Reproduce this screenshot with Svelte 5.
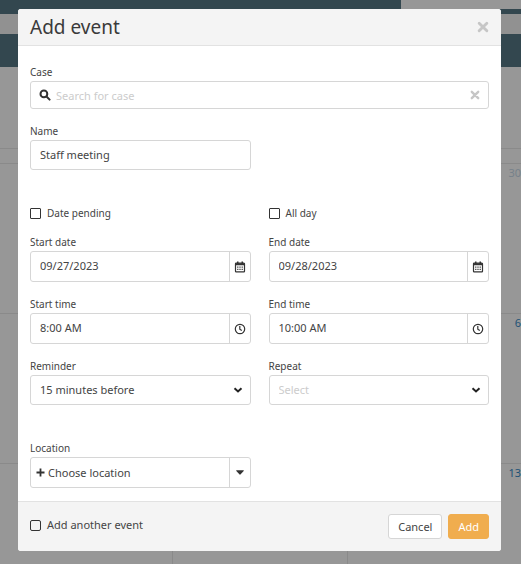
<script lang="ts">
  let caseQuery = $state('');
  let name = $state('Staff meeting');
  let datePending = $state(false);
  let allDay = $state(false);
  let startDate = $state('09/27/2023');
  let endDate = $state('09/28/2023');
  let startTime = $state('8:00 AM');
  let endTime = $state('10:00 AM');
  let reminder = $state('15');
  let repeat = $state('');
  let addAnother = $state(false);

  const weeks = ['30', '6', '13'];
</script>

{#snippet cross()}
  <svg class="cross" viewBox="0 0 10 10" aria-hidden="true">
    <path d="M1.8 1.8 8.2 8.2M8.2 1.8 1.8 8.2" />
  </svg>
{/snippet}

{#snippet calendarIcon()}
  <svg class="icon" viewBox="0 0 11 12" aria-hidden="true">
    <path class="line" d="M1.6 2.2h7.8a.6.6 0 0 1 .6.6v7.4a.6.6 0 0 1-.6.6H1.6a.6.6 0 0 1-.6-.6V2.8a.6.6 0 0 1 .6-.6z" />
    <path d="M1 2.2h9v2H1zM2.5.5h1.5v2H2.5zM7 .5h1.5v2H7z" />
    <path d="M2.7 5.5h1.2v1.2H2.7zM4.9 5.5h1.2v1.2H4.9zM7.1 5.5h1.2v1.2H7.1zM2.7 7.8h1.2v1.2H2.7zM4.9 7.8h1.2v1.2H4.9zM7.1 7.8h1.2v1.2H7.1z" />
  </svg>
{/snippet}

{#snippet clockIcon()}
  <svg class="icon" viewBox="0 0 12 12" aria-hidden="true">
    <circle class="line" cx="6" cy="6" r="4.7" />
    <path class="line" d="M5.8 3v3.2L7.8 7.6" />
  </svg>
{/snippet}

{#snippet chevron()}
  <svg class="chevron" viewBox="0 0 10 10" aria-hidden="true">
    <path d="M1.5 3.2 5 6.4 8.5 3.2" />
  </svg>
{/snippet}

<div class="page">
  <div class="backdrop">
    <div class="tabs"><span></span></div>
    <div class="subnav"></div>
    <div class="banner"></div>
    <div class="toolbar"></div>
    <div class="weekdays"></div>
    {#each weeks as day, i}
      <div class="week">
        <span></span>
        <span></span>
        <span class="day" class:other={i === 0}>{day}</span>
      </div>
    {/each}
  </div>

  <form class="modal" onsubmit={(e) => e.preventDefault()}>
    <header>
      <h1>Add event</h1>
      <button type="button" class="close" aria-label="Close">{@render cross()}</button>
    </header>

    <div class="body">
      <div class="field">
        <label for="case">Case</label>
        <div class="control search">
          <svg class="icon" viewBox="0 0 12 12" aria-hidden="true">
            <circle class="bold" cx="4.9" cy="4.9" r="3.4" />
            <path class="bold" d="M7.5 7.5 10.6 10.6" />
          </svg>
          <input id="case" type="text" placeholder="Search for case" bind:value={caseQuery} />
          <button type="button" class="clear" aria-label="Clear" onclick={() => (caseQuery = '')}>
            {@render cross()}
          </button>
        </div>
      </div>

      <div class="row">
        <div class="field">
          <label for="name">Name</label>
          <div class="control">
            <input id="name" type="text" bind:value={name} />
          </div>
        </div>
      </div>

      <div class="row section">
        <label class="check"><input type="checkbox" bind:checked={datePending} />Date pending</label>
        <label class="check"><input type="checkbox" bind:checked={allDay} />All day</label>
      </div>

      <div class="row">
        <div class="field">
          <label for="start-date">Start date</label>
          <div class="control group">
            <input id="start-date" type="text" bind:value={startDate} />
            <button type="button" aria-label="Pick start date">{@render calendarIcon()}</button>
          </div>
        </div>
        <div class="field">
          <label for="end-date">End date</label>
          <div class="control group">
            <input id="end-date" type="text" bind:value={endDate} />
            <button type="button" aria-label="Pick end date">{@render calendarIcon()}</button>
          </div>
        </div>
      </div>

      <div class="row">
        <div class="field">
          <label for="start-time">Start time</label>
          <div class="control group">
            <input id="start-time" type="text" bind:value={startTime} />
            <button type="button" aria-label="Pick start time">{@render clockIcon()}</button>
          </div>
        </div>
        <div class="field">
          <label for="end-time">End time</label>
          <div class="control group">
            <input id="end-time" type="text" bind:value={endTime} />
            <button type="button" aria-label="Pick end time">{@render clockIcon()}</button>
          </div>
        </div>
      </div>

      <div class="row">
        <div class="field">
          <label for="reminder">Reminder</label>
          <div class="control select">
            <select id="reminder" bind:value={reminder}>
              <option value="15">15 minutes before</option>
              <option value="30">30 minutes before</option>
            </select>
            {@render chevron()}
          </div>
        </div>
        <div class="field">
          <label for="repeat">Repeat</label>
          <div class="control select">
            <select id="repeat" class:empty={repeat === ''} bind:value={repeat}>
              <option value="">Select</option>
              <option value="daily">Daily</option>
              <option value="weekly">Weekly</option>
            </select>
            {@render chevron()}
          </div>
        </div>
      </div>

      <div class="row section">
        <div class="field">
          <label for="location">Location</label>
          <div class="control group">
            <button type="button" id="location" class="choose">
              <svg class="plus" viewBox="0 0 9 9" aria-hidden="true">
                <path d="M4.5.5v8M.5 4.5h8" />
              </svg>
              Choose location
            </button>
            <button type="button" aria-label="More locations">
              <svg class="caret" viewBox="0 0 8 5" aria-hidden="true">
                <path d="M.4.3h7.2q.4.2.1.6L4.4 4.6q-.4.3-.8 0L.3.9Q0 .5.4.3z" />
              </svg>
            </button>
          </div>
        </div>
      </div>
    </div>

    <footer>
      <label class="check large"><input type="checkbox" bind:checked={addAnother} />Add another event</label>
      <div class="actions">
        <button type="button" class="btn">Cancel</button>
        <button type="submit" class="btn primary">Add</button>
      </div>
    </footer>
  </form>
</div>

<style>
  .page {
    display: grid;
    min-height: 100vh;
    overflow: hidden;
    font-family: 'Noto Sans', 'Open Sans', sans-serif;
    font-size: 11px;
    color: #444;
    background: #979797;
  }

  .page > * {
    grid-area: 1 / 1;
    min-width: 0;
  }

  * {
    box-sizing: border-box;
  }

  button,
  input,
  select {
    margin: 0;
    padding: 0;
    border: none;
    background: none;
    font: inherit;
    color: inherit;
  }

  button {
    display: flex;
    align-items: center;
    justify-content: center;
    cursor: pointer;
  }

  /* dimmed calendar behind the dialog */
  .backdrop {
    display: flex;
    flex-direction: column;
  }

  .tabs {
    display: flex;
    justify-content: flex-end;
    height: 14px;
    background: #33474f;
  }

  .tabs span {
    width: 23%;
    height: 9px;
    background: #979797;
  }

  .subnav {
    height: 20px;
    background: #919191;
  }

  .banner {
    height: 33px;
    background: #33474f;
  }

  .toolbar {
    height: 81px;
  }

  .weekdays {
    height: 15px;
    border-top: 1px solid #8a8a8a;
  }

  .week {
    display: grid;
    grid-template-columns: 99fr 101fr 100fr;
    height: 150px;
    border-top: 1px solid #8a8a8a;
  }

  .week:last-child {
    flex: 1;
    height: auto;
  }

  .week span + span {
    border-left: 1px solid #8a8a8a;
  }

  .week .day {
    padding-top: 1px;
    font-size: 11px;
    line-height: 15px;
    text-align: right;
    color: #1d5276;
  }

  .week .other {
    color: #76818a;
  }

  .modal {
    align-self: start;
    margin: 9px 20px 13px 18px;
    border-radius: 3px;
    overflow: hidden;
    background: #fff;
  }

  header {
    display: flex;
    align-items: center;
    justify-content: space-between;
    height: 37px;
    padding: 0 12px;
    border-bottom: 1px solid #e2e2e2;
    background: #f4f4f4;
  }

  h1 {
    margin: 0;
    font-size: 19px;
    font-weight: 400;
    line-height: 24px;
    color: #3a3a3a;
  }

  .cross {
    display: block;
    width: 10px;
    height: 10px;
    fill: none;
    stroke: #c6c6c6;
    stroke-width: 2.4;
    stroke-linecap: round;
  }

  .close .cross {
    width: 12px;
    height: 12px;
  }

  .body {
    display: flex;
    flex-direction: column;
    gap: 15px;
    padding: 19px 12px 13px;
  }

  .row {
    display: grid;
    grid-template-columns: 1fr 1fr;
    gap: 18px;
  }

  .section {
    margin-top: 21px;
  }

  .field {
    display: flex;
    flex-direction: column;
    gap: 2px;
    min-width: 0;
  }

  .field > label {
    font-size: 10px;
    line-height: 14px;
  }

  .control {
    display: flex;
    align-items: center;
    height: 30px;
    border: 1px solid #d6d6d6;
    border-radius: 3px;
  }

  .control input {
    flex: 1;
    min-width: 0;
    height: 100%;
    padding: 0 0 2px 9px;
    outline: none;
  }

  .search {
    height: 28px;
    padding: 0 8px;
  }

  .search input {
    padding: 0 5px;
  }

  input::placeholder {
    color: #ccc;
    opacity: 1;
  }

  .icon {
    display: block;
    width: 12px;
    height: 12px;
    fill: #333;
  }

  .icon .line {
    fill: none;
    stroke: #333;
    stroke-width: 1.2;
  }

  .icon .bold {
    fill: none;
    stroke: #333;
    stroke-width: 2;
    stroke-linecap: round;
  }

  .group {
    height: 31px;
  }

  .group > button {
    width: 21px;
    height: 100%;
    border-left: 1px solid #d6d6d6;
  }

  .group > .choose {
    flex: 1;
    justify-content: flex-start;
    gap: 3px;
    padding-left: 5px;
    border-left: none;
  }

  .plus {
    width: 9px;
    height: 9px;
    stroke: #333;
    stroke-width: 1.8;
  }

  .caret {
    width: 8px;
    height: 5px;
    fill: #333;
  }

  .select {
    display: grid;
    align-items: center;
  }

  .select > * {
    grid-area: 1 / 1;
  }

  select {
    width: 100%;
    height: 28px;
    padding: 0 24px 2px 9px;
    appearance: none;
    outline: none;
  }

  .select .empty {
    color: #ccc;
  }

  .chevron {
    justify-self: end;
    width: 10px;
    height: 10px;
    margin-right: 7px;
    fill: none;
    stroke: #222;
    stroke-width: 2;
    pointer-events: none;
  }

  .check {
    display: flex;
    align-items: center;
    gap: 6px;
    font-size: 10px;
    line-height: 14px;
  }

  .check input {
    width: 11px;
    height: 11px;
    appearance: none;
    border: 1px solid #333;
    border-radius: 1px;
  }

  .check input:checked {
    background: #444;
  }

  .large {
    padding-bottom: 3px;
    font-size: 11px;
  }

  .large input {
    border-radius: 2px;
  }

  footer {
    display: flex;
    align-items: center;
    justify-content: space-between;
    height: 50px;
    padding: 0 12px;
    border-top: 1px solid #e2e2e2;
    background: #f4f4f4;
  }

  .actions {
    display: flex;
    gap: 6px;
  }

  .btn {
    height: 25px;
    padding: 0 9px;
    border: 1px solid #d6d6d6;
    border-radius: 3px;
    background: #fff;
  }

  .primary {
    border-color: #f0ad4e;
    background: #f0ad4e;
    color: #fff;
  }
</style>
